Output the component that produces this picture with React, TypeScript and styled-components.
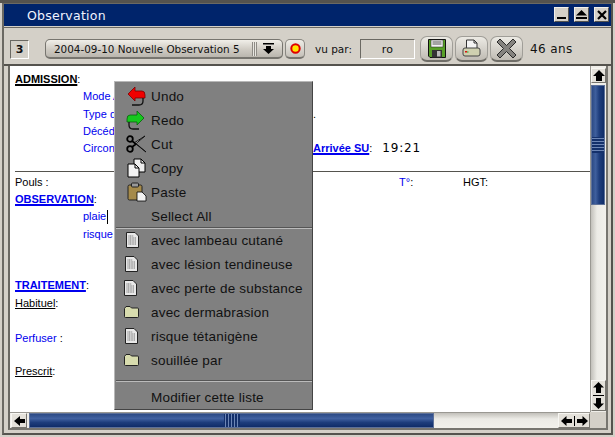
import React from "react";
import styled, { createGlobalStyle } from "styled-components";

const Global = createGlobalStyle`
  html, body { margin: 0; padding: 0; background: #d4d0c8; overflow: hidden; }
  #root { width: 615px; height: 437px; }
`;

const Desk = styled.div`
  width: 615px; height: 437px; display: flex; flex-direction: column;
  background: #d4d0c8; overflow: hidden; position: relative;
  font-family: "DejaVu Sans", sans-serif; color: #111;
`;
const TopStrip = styled.div`height: 3px; background: #55534e; flex: none;`;
const Frame = styled.div`
  flex: none; width: 611px; height: 432px; margin-left: 2px; box-sizing: border-box;
  border: 2px solid #6b6963; border-top-width: 1px; border-right-color: #55534e; border-bottom-color: #55534e;
  display: flex; flex-direction: column; background: #d4d0c8;
`;
const TitleBar = styled.div`
  height: 22px; flex: none; background: #00246b; display: flex; align-items: center;
  padding: 0 2px 0 23px; color: #f0f4ff; font-size: 12.5px; letter-spacing: .25px;
`;
const TitleText = styled.span`flex: 1;`;
const WinBtns = styled.div`display: flex; gap: 5px; padding-bottom: 1px;`;
const WinBtn = styled.div`
  width: 15px; height: 15px; background: #d4d0c8; box-sizing: border-box;
  border: 1px solid; border-color: #f2f0ea #55534e #55534e #f2f0ea;
  display: flex; align-items: center; justify-content: center;
`;
const Toolbar = styled.div`
  height: 30px; flex: none; border-top: 1px solid #6b6963; border-bottom: 2px solid #55534e;
  box-sizing: content-box; display: flex; align-items: center; padding: 6px 0 0 6px; font-size: 11px;
  margin-top: 1px;
`;
const CountBox = styled.div`
  width: 19px; height: 19px; box-sizing: border-box; border: 1px solid; border-color: #6b6963 #fff #fff #6b6963;
  font: bold 11px "DejaVu Sans", sans-serif; display: flex; align-items: center; justify-content: center;
  margin-right: 16px;
`;
const Combo = styled.div`
  width: 238px; height: 20px; box-sizing: border-box; border: 1px solid #77756f; border-radius: 5px;
  border-bottom-width: 2px; background: linear-gradient(#f1efe9, #cfcbc3 55%, #bab6ae);
  display: flex; align-items: center; padding-left: 8px; font-size: 10.4px;
`;
const ComboText = styled.span`flex: 1; white-space: nowrap;`;
const ComboGrip = styled.span`
  width: 5px; height: 14px; margin-right: 6px;
  background: repeating-linear-gradient(90deg, #8e8b85 0 1px, #e8e6e0 1px 2px);
`;
const ComboArrow = styled.span`width: 14px; margin-right: 5px; display: flex;`;
const RoundBtn = styled.div`
  width: 20px; height: 20px; margin-left: 2px; box-sizing: border-box; border: 1px solid #8a8882; border-bottom: 2px solid #77756f;
  border-radius: 5px; background: linear-gradient(#efede7, #c4c0b8); display: flex; align-items: center; justify-content: center;
`;
const VuLabel = styled.span`margin-left: 10px; width: 45px; white-space: nowrap; font-size: 10.5px;`;
const RoBox = styled.div`
  width: 55px; height: 20px; box-sizing: border-box; border: 1px solid; border-color: #6b6963 #fff #fff #6b6963;
  display: flex; align-items: center; justify-content: center; font-size: 11px; letter-spacing: .3px;
`;
const IconBtns = styled.div`display: flex; gap: 2px; margin-left: 5px;`;
const IconBtn = styled.div`
  width: 33px; height: 26px; box-sizing: border-box; border: 1px solid #a09e98; border-bottom: 2px solid #6f6d67; border-radius: 7px;
  background: linear-gradient(#eceae4, #bfbbb3); display: flex; align-items: center; justify-content: center;
`;
const Age = styled.span`margin-left: 7px; font-size: 12px; letter-spacing: .4px; white-space: nowrap;`;

const Body = styled.div`
  flex: none; display: grid; grid-template-columns: 580px 16px; grid-template-rows: 346px 16px;
  margin: 0 3px 3px 4px; width: 600px; box-sizing: border-box;
  border: 2px solid #6b6963; border-top: 0; border-right-color: #77756f; border-bottom-color: #77756f;
`;
const Editor = styled.div`
  background: #fff; padding-top: 5px; box-sizing: border-box; overflow: hidden;
  font: 11px/17.3px "Liberation Sans", Arial, sans-serif; color: #000;
`;
const Line = styled.div<{ $indent?: number; $h?: number }>`
  height: ${p => p.$h ?? 17.3}px; padding-left: ${p => p.$indent ?? 5}px; display: flex; white-space: nowrap;
`;
const Blue = styled.span`color: #0000ee;`;
const Heading = styled.span<{ $link?: boolean }>`
  font-weight: bold; text-decoration: underline; text-decoration-thickness: 2px;
  color: ${p => (p.$link ? "#0000ee" : "#000")};
`;
const Under = styled.span`text-decoration: underline;`;
const LinkBold = styled.span`color: #0000ee; font-weight: bold; text-decoration: underline; text-decoration-thickness: 2px;`;
const TimeText = styled.span`font: 12px/17.3px "DejaVu Sans", sans-serif; letter-spacing: .8px; margin-left: 10px;`;
const Rule = styled.div`height: 1px; background: #55534e; margin: 14px 0 2px 5px;`;
const Cell = styled.span<{ $w: number }>`display: inline-block; width: ${p => p.$w}px;`;
const Caret = styled.span`display: inline-block; width: 1px; height: 14px; background: #000; margin: 2px 0 0 1px;`;

const VScroll = styled.div`display: flex; flex-direction: column; padding: 2px 0 1px; border-left: 1px solid #9a9892; background: #f0eee9; box-sizing: border-box;`;
const ArrowBtn = styled.div<{ $w?: number; $h?: number }>`
  width: ${p => p.$w ?? 16}px; height: ${p => p.$h ?? 15}px; flex: none; box-sizing: border-box; background: #e4e1da;
  border: 1px solid; border-color: #f7f6f2 #77756f #77756f #f7f6f2; display: flex; align-items: center; justify-content: center;
`;
const VThumb = styled.div`
  height: 120px; margin: 2px 1px 0 0; flex: none; box-sizing: border-box; border: 1px solid #5d7098;
  background: linear-gradient(90deg, #2c4a85, #3f5f9d 30%, #1e3d7c 60%, #0f2c68);
  display: flex; align-items: center;
`;
const VGrip = styled.div`
  width: 100%; height: 16px;
  background: repeating-linear-gradient(180deg, #14306b 0 1px, #6d86b6 1px 2px, #14306b 2px 3px);
`;
const Spacer = styled.div`
  flex: 1; background: linear-gradient(90deg, #c2c0ba, #ecebe6 40%, #f2f0eb);
`;
const HSpacer = styled.div`
  flex: 1; background: linear-gradient(#c2c0ba, #ecebe6 40%, #f2f0eb);
`;
const DoubleBtn = styled.div`
  width: 15px; height: 31px; flex: none; box-sizing: border-box; background: #e4e1da;
  border: 1px solid; border-color: #f7f6f2 #77756f #77756f #f7f6f2; display: flex; align-items: center; justify-content: center;
`;
const HScroll = styled.div`display: flex; background: #f0eee9; padding-left: 1px; border-top: 1px solid #9a9892; box-sizing: border-box;`;
const HThumb = styled.div`
  width: 405px; margin-left: 2px; flex: none; box-sizing: border-box; border: 1px solid #5d7098;
  background: linear-gradient(#2c4a85, #4161a0 35%, #1e3d7c 65%, #0f2c68);
  display: flex; justify-content: center;
`;
const HGrip = styled.div`
  width: 16px; height: 100%;
  background: repeating-linear-gradient(90deg, #14306b 0 1px, #6d86b6 1px 2px, #14306b 2px 3px);
`;
const Corner = styled.div`background: #d4d0c8;`;
const HDouble = styled.div`
  width: 32px; flex: none; box-sizing: border-box; background: #e4e1da;
  border: 1px solid; border-color: #f7f6f2 #77756f #77756f #f7f6f2; display: flex; align-items: center; justify-content: center;
`;

const Menu = styled.div`
  position: absolute; left: 114px; top: 81px; width: 199px; height: 329px; box-sizing: border-box;
  background: #808080; border: 1px solid; border-color: #b8b8b8 #444 #444 #b8b8b8; padding-top: 2px;
  font: 13.5px "Liberation Sans", Arial, sans-serif; letter-spacing: .2px; color: #111; z-index: 5;
`;
const MenuItem = styled.div`height: 24px; display: flex; align-items: center;`;
const MenuIcon = styled.span<{ $x?: number }>`
  width: 36px; padding-left: ${p => 11 + (p.$x ?? 0)}px; box-sizing: border-box; display: flex; align-items: center; flex: none;
`;
const MenuSep = styled.div<{ $mt?: number; $mb?: number }>`
  height: 2px; margin: ${p => p.$mt ?? 0}px 0 ${p => p.$mb ?? 0}px 1px; background: linear-gradient(#555 50%, #bbb 50%);
`;

const Up = () => <svg width="12" height="11" viewBox="0 0 12 11"><path d="M6 0L12 6H9V11H3V6H0Z" fill="#000" /></svg>;
const Left = () => <svg width="11" height="10" viewBox="0 0 11 10"><path d="M0 5L6 0V3H11V7H6V10Z" fill="#000" /></svg>;

const Undo = () => (
  <svg width="20" height="20" viewBox="0 0 20 20"><path d="M2 8L9 1V5H16Q19 5 19 9V12H9V15L2 8Z" fill="#f00000" stroke="#7a0000" strokeWidth=".8" /><path d="M17 12V15Q17 19 13 19H6" fill="none" stroke="#111" strokeWidth="1.3" /></svg>
);
const Redo = () => (
  <svg width="20" height="20" viewBox="0 0 20 20"><path d="M18 8L11 1V5H4Q1 5 1 9V12H11V15L18 8Z" fill="#16c81e" stroke="#075f0c" strokeWidth=".8" /><path d="M3 12V15Q3 19 7 19H13" fill="none" stroke="#111" strokeWidth="1.3" /></svg>
);
const Cut = () => (
  <svg width="21" height="20" viewBox="0 0 21 20">
    <path d="M6 7L20 18L10 9.5L19 2L8 9Z" fill="#eee" stroke="#111" strokeWidth="1" />
    <circle cx="4" cy="5" r="2.8" fill="none" stroke="#000" strokeWidth="1.8" /><circle cx="4" cy="15" r="2.8" fill="none" stroke="#000" strokeWidth="1.8" />
    <path d="M6 13L10 10M6 7L10 10" stroke="#000" strokeWidth="1.6" />
  </svg>
);
const Copy = () => (
  <svg width="20" height="20" viewBox="0 0 20 20">
    <path d="M8 1H15L19 5V14H8Z" fill="#eee" stroke="#000" strokeWidth="1" /><path d="M2 6H9L13 10V19H2Z" fill="#f2f2f2" stroke="#000" strokeWidth="1" /><path d="M9 6V10H13M15 1V5H19" fill="none" stroke="#000" />
  </svg>
);
const Paste = () => (
  <svg width="20" height="20" viewBox="0 0 20 20">
    <rect x="1" y="3" width="14" height="15" rx="1.5" fill="#a58a4a" stroke="#222" /><rect x="4.5" y="1" width="7" height="4" rx="1" fill="#999" stroke="#222" />
    <path d="M10 10H15L19 14V19H10Z" fill="#f2f2f2" stroke="#000" strokeWidth=".8" />
  </svg>
);
const Doc = () => (
  <svg width="13" height="16" viewBox="0 0 13 16">
    <path d="M.5.5H9L12.5 4V15.5H.5Z" fill="#e8e8e8" stroke="#222" />
    <path d="M2.5 4h5M2.5 6h8M2.5 8h8M2.5 10h8M2.5 12h8" stroke="#666" strokeDasharray="1 .6" />
  </svg>
);
const Folder = () => (
  <svg width="15" height="12" viewBox="0 0 15 12">
    <path d="M.5 2.5L2 .5H6L7.5 2H13.5Q14.5 2 14.5 3V10.5Q14.5 11.5 13.5 11.5H1.5Q.5 11.5 .5 10.5Z" fill="#d8dcae" stroke="#222" />
  </svg>
);
const Save = () => (
  <svg width="18" height="19" viewBox="0 0 18 19">
    <path d="M.5.5H17.5V18.5H2L.5 17Z" fill="#58a028" stroke="#111" /><rect x="3" y="1" width="12" height="7" fill="#f3f3f3" stroke="#222" strokeWidth=".5" />
    <path d="M4.5 3H13.5M4.5 5H13.5" stroke="#555" /><rect x="4" y="11" width="10" height="7.5" fill="#333" /><rect x="9" y="12" width="3.5" height="5.5" fill="#bbb" />
  </svg>
);
const Printer = () => (
  <svg width="19" height="19" viewBox="0 0 19 19">
    <path d="M4.5 1H12L15 4V10H4.5Z" fill="#f4f4f4" stroke="#333" /><path d="M12 1V4H15" fill="none" stroke="#333" />
    <rect x="1" y="9" width="17" height="8" rx="2" fill="#cfd0b0" stroke="#444" /><rect x="3" y="12" width="2" height="1.5" fill="#d11" /><rect x="5" y="12.5" width="1.5" height="1" fill="#2a2" />
  </svg>
);
const XIcon = () => (
  <svg width="21" height="21" viewBox="0 0 21 21">
    <path d="M4 1L10.5 7.5L17 1L20 4L13.5 10.5L20 17L17 20L10.5 13.5L4 20L1 17L7.5 10.5L1 4Z" fill="#85837f" stroke="#2a2a2a" />
  </svg>
);

const docs: [string, React.ReactNode, number][] = [
  ["avec lambeau cutané", <Doc />, 0],
  ["avec lésion tendineuse", <Doc />, -1],
  ["avec perte de substance", <Doc />, -2],
  ["avec dermabrasion", <Folder />, -2],
  ["risque tétanigène", <Doc />, -1],
  ["souillée par", <Folder />, -2],
];

export default function App() {
  return (
    <Desk>
      <Global />
      <TopStrip />
      <Frame>
        <TitleBar>
          <TitleText>Observation</TitleText>
          <WinBtns>
            <WinBtn><svg width="9" height="9"><rect x="0" y="7" width="9" height="2" fill="#000" /></svg></WinBtn>
            <WinBtn><svg width="11" height="9"><path d="M5.5 0L11 5.5H0Z M0 7H11V9H0Z" fill="#000" /></svg></WinBtn>
            <WinBtn><svg width="10" height="10"><path d="M1 1L9 9M9 1L1 9" stroke="#000" strokeWidth="2.2" /></svg></WinBtn>
          </WinBtns>
        </TitleBar>
        <Toolbar>
          <CountBox>3</CountBox>
          <Combo>
            <ComboText>2004-09-10 Nouvelle Observation 5</ComboText>
            <ComboGrip />
            <ComboArrow><svg width="11" height="11" viewBox="0 0 11 11"><path d="M0 0H11V1.5H0ZM3 3H8V6H11L5.5 11L0 6H3Z" fill="#000" /></svg></ComboArrow>
          </Combo>
          <RoundBtn><svg width="11" height="11"><circle cx="5.5" cy="5.5" r="4.2" fill="#ffe600" stroke="#e00000" strokeWidth="2" /></svg></RoundBtn>
          <VuLabel>vu par:</VuLabel>
          <RoBox>ro</RoBox>
          <IconBtns>
            <IconBtn><Save /></IconBtn>
            <IconBtn><Printer /></IconBtn>
            <IconBtn><XIcon /></IconBtn>
          </IconBtns>
          <Age>46 ans</Age>
        </Toolbar>
        <Body>
          <Editor>
            <Line><Heading>ADMISSION</Heading>:</Line>
            <Line $indent={73}><Blue>Mode Arrivée</Blue></Line>
            <Line $indent={73}><Cell $w={230}><Blue>Type de</Blue></Cell>.</Line>
            <Line $indent={73}><Blue>Décédé</Blue></Line>
            <Line $indent={73}><Cell $w={230}><Blue>Circonstances</Blue></Cell><LinkBold>Arrivée SU</LinkBold>:<TimeText>19:21</TimeText></Line>
            <Rule />
            <Line $h={16.5}><Cell $w={384}>Pouls :</Cell><Cell $w={64}><Blue>T°</Blue>:</Cell><span>HGT:</span></Line>
            <Line><Heading $link>OBSERVATION</Heading>:</Line>
            <Line $indent={73}><Blue>plaie</Blue><Caret /></Line>
            <Line $indent={73} $h={51}><Blue>risque</Blue></Line>
            <Line $h={18.3}><Heading $link>TRAITEMENT</Heading>:</Line>
            <Line $h={35}><Under>Habituel</Under>:</Line>
            <Line $h={33}><Blue>Perfuser</Blue>&nbsp;:</Line>
            <Line><Under>Prescrit</Under>:</Line>
          </Editor>
          <VScroll>
            <ArrowBtn $w={15}><Up /></ArrowBtn>
            <VThumb><VGrip /></VThumb>
            <Spacer />
            <DoubleBtn>
              <svg width="11" height="27" viewBox="0 0 11 27"><path d="M5.5 0L11 5.5H8V11H3V5.5H0ZM0 13H11V14H0ZM5.5 27L11 21.5H8V16H3V21.5H0Z" fill="#000" /></svg>
            </DoubleBtn>
          </VScroll>
          <HScroll>
            <ArrowBtn><Left /></ArrowBtn>
            <HThumb><HGrip /></HThumb>
            <HSpacer />
            <HDouble>
              <svg width="27" height="10" viewBox="0 0 27 10"><path d="M0 5L5.5 0V3H11V7H5.5V10ZM13 0H14V10H13ZM27 5L21.5 0V3H16V7H21.5V10Z" fill="#000" /></svg>
            </HDouble>
          </HScroll>
          <Corner />
        </Body>
      </Frame>
      <Menu>
        <MenuItem><MenuIcon><Undo /></MenuIcon>Undo</MenuItem>
        <MenuItem><MenuIcon><Redo /></MenuIcon>Redo</MenuItem>
        <MenuItem><MenuIcon><Cut /></MenuIcon>Cut</MenuItem>
        <MenuItem><MenuIcon><Copy /></MenuIcon>Copy</MenuItem>
        <MenuItem><MenuIcon $x={1}><Paste /></MenuIcon>Paste</MenuItem>
        <MenuItem><MenuIcon />Sellect All</MenuItem>
        <MenuSep $mt={-1} $mb={-1} />
        {docs.map(([t, ic, x]) => (
          <MenuItem key={t}><MenuIcon $x={x}>{ic}</MenuIcon>{t}</MenuItem>
        ))}
        <MenuSep $mt={8} $mb={3} />
        <MenuItem><MenuIcon />Modifier cette liste</MenuItem>
      </Menu>
    </Desk>
  );
}
